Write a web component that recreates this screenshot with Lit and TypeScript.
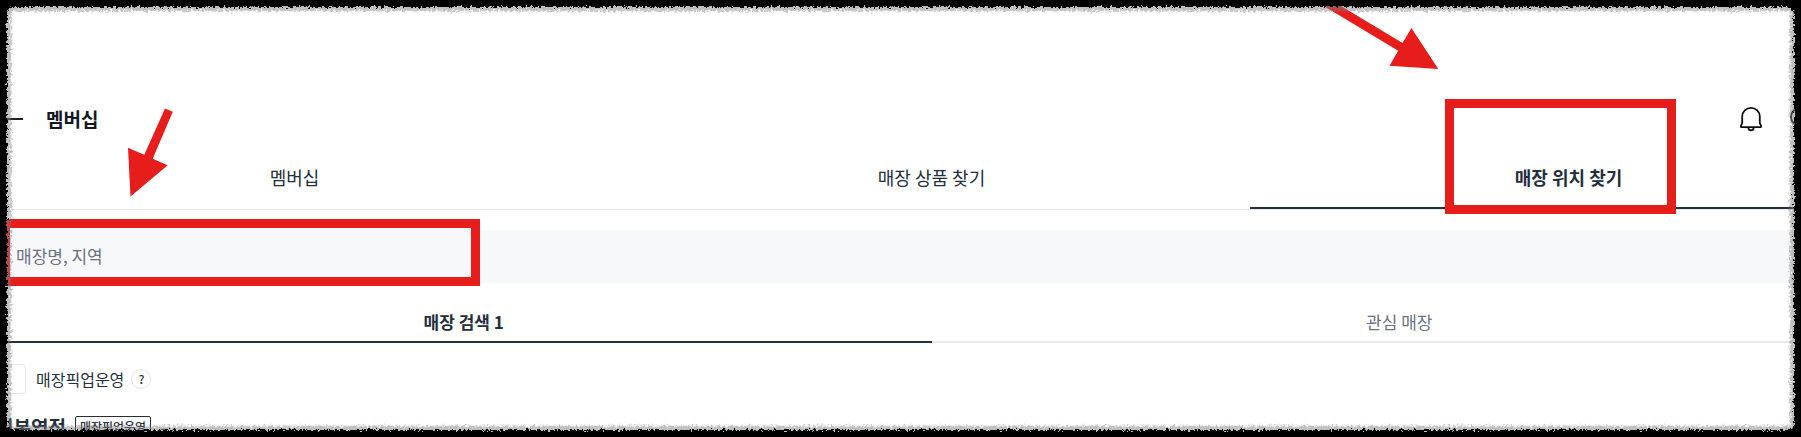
import { LitElement, html, css } from "lit";
import { customElement, state } from "lit/decorators.js";

@customElement("app-root")
export class AppRoot extends LitElement {
  static styles = css`
    :host {
      display: block;
      position: relative;
      height: 100vh;
      overflow: hidden;
      background: #fff;
      color: #242f3c;
      font-family: "Noto Sans CJK KR", "Noto Sans", sans-serif;
      font-size: 17px;
      line-height: 24px;
    }
    * {
      box-sizing: border-box;
    }
    button,
    input {
      font: inherit;
      color: inherit;
      margin: 0;
      padding: 0;
      border: 0;
      background: none;
    }
    /* The page runs past both sides of the torn frame. */
    .page {
      width: calc(100% + 110px);
      margin-left: -24px;
      padding-top: 92px;
    }
    .header {
      display: flex;
      align-items: center;
      height: 54px;
      padding: 0 72px 0 20px;
    }
    .icon {
      display: block;
      flex: none;
    }
    .title {
      flex: 1;
      margin: 0 0 0 22px;
      font-size: 19px;
      font-weight: 700;
      color: #14181f;
    }
    .actions {
      display: flex;
      gap: 26px;
    }
    .tabs {
      display: grid;
      grid-template-columns: repeat(3, 1fr);
      height: 64px;
      border-bottom: 1px solid #e8e9eb;
      font-size: 18px;
    }
    .tab {
      border-bottom: 2px solid transparent;
    }
    .tab.on {
      border-color: #242f3c;
      font-weight: 700;
    }
    .body {
      padding: 20px 20px 0;
    }
    .search {
      display: block;
      width: 100%;
      height: 53px;
      padding: 0 20px 2px;
      background: #f7f8fa;
    }
    .search::placeholder {
      color: #6a7380;
      opacity: 1;
    }
    .subtabs {
      display: grid;
      grid-template-columns: repeat(2, 1fr);
      height: 60px;
    }
    .subtab {
      padding-top: 20px;
      border-bottom: 2px solid #e9eaef;
      color: #6a7380;
    }
    .subtab.on {
      border-color: #242f3c;
      color: #242f3c;
      font-weight: 700;
    }
    .filter {
      display: flex;
      align-items: center;
      margin-top: 21px;
      font-size: 16px;
    }
    .check {
      appearance: none;
      width: 30px;
      height: 30px;
      margin-right: 10px;
      border: 1px solid #e4e6ec;
      border-radius: 4px;
    }
    .help {
      width: 20px;
      height: 20px;
      margin-left: 7px;
      border: 1px solid #e4e6ec;
      border-radius: 50%;
      font-size: 12px;
      font-weight: 500;
      line-height: 18px;
    }
    .store {
      display: flex;
      align-items: center;
      gap: 9px;
      margin-top: 21px;
    }
    .name {
      margin: 0;
      font-size: 19px;
      font-weight: 700;
    }
    .badge {
      padding: 0 4px;
      border: 1px solid #242f3c;
      border-radius: 2px;
      font-size: 12px;
      font-weight: 500;
      line-height: 20px;
    }
    .marks {
      position: absolute;
      inset: 0;
      width: 100%;
      height: 100%;
      pointer-events: none;
    }
    .frame {
      position: absolute;
      inset: -14px;
      border: 21px solid #000;
      border-radius: 28px;
      outline: 20px solid #000;
      box-shadow: inset 0 0 2px 4px rgba(125, 125, 125, 0.5);
      filter: url(#torn);
      pointer-events: none;
    }
    .defs {
      position: absolute;
      width: 0;
      height: 0;
    }
  `;

  @state() private tab = 2;
  @state() private subtab = 0;

  private tabs = ["멤버십", "매장 상품 찾기", "매장 위치 찾기"];
  private subtabs = ["매장 검색 1", "관심 매장"];

  render() {
    return html`
      <div class="page">
        <header class="header">
          <button aria-label="뒤로">
            <svg class="icon" width="28" height="24" viewBox="0 0 28 24" fill="none" stroke="#222" stroke-width="2">
              <path d="M27 12H2M11 3L2 12l9 9" />
            </svg>
          </button>
          <h1 class="title">멤버십</h1>
          <div class="actions">
            <button aria-label="알림">
              <svg class="icon" width="24" height="26" viewBox="0 0 24 26" fill="none" stroke="#111" stroke-width="1.8" stroke-linejoin="round">
                <path d="M3.2 17.2V10.6a8.8 8.8 0 0 1 17.6 0v6.6l1.2 2.2v1.7H2v-1.7z" />
                <path d="M9.2 21c0 1.9 1.1 3.3 2.8 3.3s2.8-1.4 2.8-3.3" />
              </svg>
            </button>
            <button aria-label="검색">
              <svg class="icon" width="26" height="26" viewBox="0 0 26 26" fill="none" stroke="#111" stroke-width="1.8">
                <circle cx="11" cy="11" r="9" />
                <path d="M17.5 17.5l7 7" />
              </svg>
            </button>
          </div>
        </header>
        <nav class="tabs">
          ${this.tabs.map(
            (t, i) => html`<button class="tab ${i === this.tab ? "on" : ""}" @click=${() => (this.tab = i)}>${t}</button>`
          )}
        </nav>
        <main class="body">
          <input class="search" type="text" aria-label="매장명, 지역" placeholder="매장명, 지역" />
          <div class="subtabs">
            ${this.subtabs.map(
              (t, i) => html`<button class="subtab ${i === this.subtab ? "on" : ""}" @click=${() => (this.subtab = i)}>${t}</button>`
            )}
          </div>
          <div class="filter">
            <input class="check" id="pickup" type="checkbox" />
            <label for="pickup">매장픽업운영</label>
            <button class="help" aria-label="도움말">?</button>
          </div>
          <div class="store">
            <h2 class="name">리본영점</h2>
            <span class="badge">매장픽업운영</span>
            <span>-</span>
          </div>
        </main>
      </div>

      <svg class="marks" aria-hidden="true">
        <g fill="#e71d1c">
          <path d="M165 108.5L172.8 111.7L152.7 158.7L167.7 165.3L130.5 196.5L128 147.7L144.3 154.7Z" />
          <path d="M1313.7 0H1331L1402.6 43L1411.4 28L1438.3 69L1389.5 65.7L1398.2 50.7Z" />
        </g>
        <g fill="none" stroke="#e71d1c" stroke-width="9">
          <rect x="5.5" y="223.5" width="470" height="58" />
          <rect x="1449.5" y="103.5" width="222" height="106" />
        </g>
      </svg>

      <svg class="defs" aria-hidden="true">
        <filter id="torn" x="0" y="0" width="100%" height="100%" color-interpolation-filters="sRGB">
          <feTurbulence type="fractalNoise" baseFrequency="0.4" numOctaves="3" seed="4" result="n" />
          <feDisplacementMap in="SourceGraphic" in2="n" scale="7" xChannelSelector="R" yChannelSelector="G" />
        </filter>
      </svg>
      <div class="frame"></div>
    `;
  }
}
